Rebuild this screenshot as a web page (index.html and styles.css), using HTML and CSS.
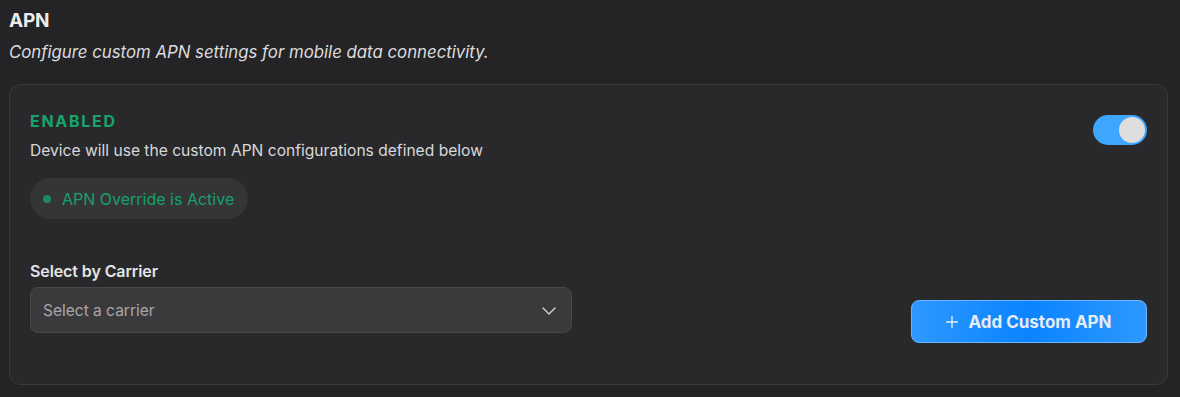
FILE: index.html
```html
<!DOCTYPE html>
<html>
<head>
<meta charset="utf-8">
<link rel="stylesheet" href="styles.css">
</head>
<body>
<div class="page">
  <h1 class="title">APN</h1>
  <p class="subtitle">Configure custom APN settings for mobile data connectivity.</p>
  <section class="card">
    <div class="status-row">
      <div class="status-info">
        <div class="status-label">ENABLED</div>
        <div class="status-desc">Device will use the custom APN configurations defined below</div>
        <div class="pill"><span class="dot"></span><span>APN Override is Active</span></div>
      </div>
      <div class="toggle"><span class="knob"></span></div>
    </div>
    <div class="bottom-row">
      <div class="field">
        <label class="field-label">Select by Carrier</label>
        <div class="select">
          <span>Select a carrier</span>
          <svg class="chev" width="14" height="14" viewBox="0 0 14 14"><path d="M1 4 L7 10 L13 4" fill="none" stroke="#d6d6d8" stroke-width="1.4" stroke-linecap="round" stroke-linejoin="round"/></svg>
        </div>
      </div>
      <button class="add-btn"><svg width="12" height="12" viewBox="0 0 12 12"><path d="M6 0.5 V11.5 M0.5 6 H11.5" stroke="#e4ecf7" stroke-width="1.4" stroke-linecap="round"/></svg><span>Add Custom APN</span></button>
    </div>
  </section>
</div>
</body>
</html>
```
FILE: styles.css
```css
* { box-sizing: border-box; }
html, body { margin: 0; padding: 0; background: #242426; }
body { font-family: Inter, "Liberation Sans", sans-serif; color: #e6e6e8; }
.page { padding: 10px 12px 12px 9px; }
.title { margin: 0; font-size: 19px; font-weight: 700; line-height: 22px; color: #ececee; letter-spacing: -0.2px; }
.subtitle { margin: 9px 0 0; font-size: 16.8px; font-style: italic; line-height: 22px; color: #dcdcde; }
.card {
  margin-top: 21px;
  background: #29292b;
  border: 1px solid #3a3a3c;
  border-radius: 12px;
  padding: 26px 20px 41px 20px;
}
.status-row { display: flex; justify-content: space-between; align-items: flex-start; }
.status-label { font-size: 16px; font-weight: 700; letter-spacing: 1.7px; color: #18a36d; line-height: 20px; }
.status-desc { margin-top: 10px; font-size: 15.6px; line-height: 20px; color: #d8d8da; }
.pill {
  margin-top: 17px;
  display: inline-flex; align-items: center; gap: 11px;
  height: 41px; padding: 0 14px 0 13px;
  background: #353537; border-radius: 21px;
  color: #17a06b; font-size: 16px;
}
.dot { width: 8px; height: 8px; border-radius: 50%; background: #1a8a60; }
.toggle {
  margin-top: 4px;
  width: 54px; height: 30px; border-radius: 15px;
  background: #3ea6ff;
  display: flex; align-items: center; justify-content: flex-end;
  padding: 0 2px;
}
.knob { width: 26px; height: 26px; border-radius: 50%; background: #dedede; }
.bottom-row { display: flex; justify-content: space-between; align-items: flex-end; margin-top: 42px; }
.field { width: 542px; padding-bottom: 10px; }
.field-label { display: block; font-size: 16px; font-weight: 600; color: #e4e4e6; line-height: 20px; letter-spacing: -0.1px; }
.select {
  margin-top: 6px;
  height: 46px; border: 1px solid #48484a; border-radius: 8px;
  background: #3a3a3c;
  display: flex; align-items: center; justify-content: space-between;
  padding: 0 15px 0 12px;
  font-size: 15.5px; color: #a8a8aa;
}
.chev { margin-top: 1px; }
.add-btn {
  width: 236px; height: 43px;
  border: 1px solid #6bb6ff; border-radius: 8px;
  background: linear-gradient(90deg, #2e98ff 0%, #0a84ff 50%, #2e98ff 100%);
  color: #e6ecf4; font-family: inherit; font-size: 17px; font-weight: 700;
  display: flex; align-items: center; justify-content: center; gap: 10px;
  padding: 0;
}
```
